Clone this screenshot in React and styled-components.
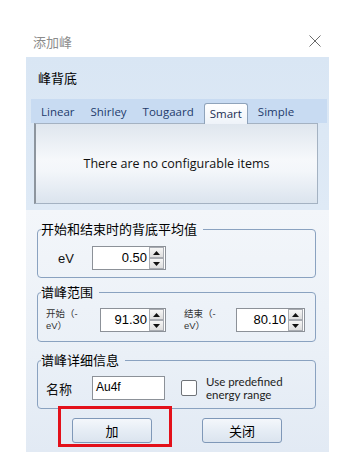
import React from 'react';
import styled, { createGlobalStyle } from 'styled-components';

const GlobalStyle = createGlobalStyle`
  html, body {
    margin: 0;
    padding: 0;
    background: #ffffff;
  }
  * {
    box-sizing: border-box;
  }
`;

const cjk = `"Noto Sans CJK SC", "Noto Sans", sans-serif`;
const ui = `"Open Sans", "Noto Sans CJK SC", sans-serif`;
const num = `"Liberation Sans", Arial, sans-serif`;

const Window = styled.div`
  width: 340px;
  height: 470px;
  background: #ffffff;
  font-family: ${cjk};
  color: #000;
  overflow: hidden;
`;

const TitleBar = styled.div`
  display: flex;
  align-items: center;
  justify-content: space-between;
  height: 30px;
  margin-top: 26px;
  margin-bottom: 1px;
  padding: 0 19px 0 33px;

  span {
    font-size: 13px;
    color: #8c8c8c;
  }
`;

const Dialog = styled.div`
  margin: 0 11px 0 26px;
`;

const HeaderPanel = styled.div`
  height: 153px;
  background: linear-gradient(180deg, #d9e6f4 0%, #dfeaf6 100%);
  padding: 0 2px 0 5px;
  display: flex;
  flex-direction: column;
`;

const PanelTitle = styled.div`
  height: 42px;
  display: flex;
  align-items: center;
  padding-left: 7px;
  padding-bottom: 2px;
  font-size: 13px;
  color: #000;
`;

const TabStrip = styled.div`
  display: flex;
  align-items: flex-end;
  height: 24px;
  padding-left: 4px;
  gap: 4px;
  background: #c8dbf2;
`;

const Tab = styled.div`
  font-family: ${ui};
  font-size: 11.5px;
  color: ${p => (p.$active ? '#1a2e52' : '#1f3b6c')};
  padding: 0 5px;
  height: ${p => (p.$active ? '21px' : '22px')};
  line-height: 20px;
  border: 1px solid ${p => (p.$active ? '#8fa3ba' : 'transparent')};
  border-bottom: none;
  border-radius: 3px 3px 0 0;
  background: ${p =>
    p.$active ? 'linear-gradient(180deg, #ffffff 0%, #eef3f9 100%)' : 'transparent'};
  margin-bottom: ${p => (p.$active ? '-1px' : '0')};
  position: relative;
`;

const TabPage = styled.div`
  margin: 0 9px 0 3px;
  height: 81px;
  border: 1px solid #a4b2c2;
  border-left: 2px solid #8d959e;
  background: linear-gradient(180deg, #dfe6ee 0%, #f6f8fb 45%, #f3f6fa 60%, #dbe4ee 100%);
  display: flex;
  align-items: center;
  justify-content: center;
  font-family: ${ui};
  font-size: 12.5px;
  color: #111;
`;

const Body = styled.div`
  height: 242px;
  background: linear-gradient(180deg, #f3f6fa 0%, #eaf0f7 60%, #e2eaf4 100%);
  padding: 10px 13px 9px 11px;
  display: flex;
  flex-direction: column;
`;

const Group = styled.fieldset`
  margin: ${p => p.$top || 0}px 0 0 0;
  padding: ${p => p.$pt}px 0 ${p => p.$pb}px ${p => p.$pl}px;
  border: 1px solid #8aa2c0;
  border-radius: 4px;
  min-width: 0;

  legend {
    font-size: 13px;
    line-height: 18px;
    padding: 0 6px 0 0;
    margin-left: ${p => 3 - p.$pl}px;
    color: #000;
  }
`;

const Row = styled.div`
  display: flex;
  align-items: center;
  height: 24px;
`;

const Label = styled.div`
  width: ${p => p.$w}px;
  flex: none;
  font-family: ${p => (p.$num ? num : cjk)};
  font-size: 13px;
  color: #111;
`;

const SmallLabel = styled.div`
  width: ${p => p.$w}px;
  margin-left: ${p => p.$ml || 0}px;
  flex: none;
  font-family: "Liberation Sans", "Noto Sans CJK SC", sans-serif;
  font-size: 9.5px;
  line-height: 12px;
  color: #333;
`;

const SpinBox = styled.div`
  display: flex;
  height: 24px;
  flex: none;
`;

const SpinInput = styled.div`
  width: ${p => p.$w}px;
  height: 24px;
  border: 1px solid #8c9198;
  border-right: none;
  background: #ffffff;
  font-family: ${num};
  font-size: 13px;
  line-height: 22px;
  text-align: right;
  padding-right: 2px;
  color: #000;
`;

const SpinButtons = styled.div`
  width: 17px;
  height: 24px;
  display: flex;
  flex-direction: column;
  border: 1px solid #8c9198;
  border-left: none;
  background: #fff;
  padding: 0 1px 0 0;
`;

const SpinButton = styled.div`
  flex: 1;
  border: 1px solid #a9acb2;
  background: linear-gradient(180deg, #f6f6f6 0%, #dedede 100%);
  display: flex;
  align-items: center;
  justify-content: center;
`;

const TextInput = styled.div`
  width: ${p => p.$w}px;
  height: 24px;
  flex: none;
  border: 1px solid #8c9198;
  background: #ffffff;
  font-family: ${num};
  font-size: 12px;
  line-height: 20px;
  padding-left: 3px;
  color: #000;
`;

const CheckBox = styled.div`
  width: 16px;
  height: 16px;
  flex: none;
  margin-left: 16px;
  border: 1px solid #6f7378;
  border-radius: 2px;
  background: #fff;
`;

const CheckText = styled.div`
  margin-left: 9px;
  font-family: Lato, "Open Sans", sans-serif;
  font-size: 11.5px;
  line-height: 13.5px;
  color: #222;
`;

const ButtonRow = styled.div`
  display: flex;
  gap: 50px;
  margin-top: 9px;
  padding-left: 35px;
`;

const ButtonSlot = styled.div`
  position: relative;
`;

const Button = styled.div`
  width: 80px;
  height: 25px;
  border: 1px solid #7f98b8;
  border-radius: 3px;
  background: linear-gradient(180deg, #f4f7fb 0%, #e6edf5 50%, #dbe4ef 100%);
  display: flex;
  align-items: center;
  justify-content: center;
  font-size: 13px;
  color: #000;
`;

const Highlight = styled.div`
  position: absolute;
  left: -14px;
  top: -12px;
  right: -20px;
  bottom: -4px;
  border: 3px solid #e3101a;
  pointer-events: none;
`;

const Arrow = ({ up }) => (
  <svg width="7" height="4" viewBox="0 0 7 4">
    <path d={up ? 'M0 4 L3.5 0 L7 4 Z' : 'M0 0 L3.5 4 L7 0 Z'} fill="#111" />
  </svg>
);

const Spinner = ({ value, w }) => (
  <SpinBox>
    <SpinInput $w={w}>{value}</SpinInput>
    <SpinButtons>
      <SpinButton>
        <Arrow up />
      </SpinButton>
      <SpinButton>
        <Arrow />
      </SpinButton>
    </SpinButtons>
  </SpinBox>
);

const CloseIcon = () => (
  <svg width="12" height="12" viewBox="0 0 12 12">
    <path d="M0.5 0.5 L11.5 11.5 M11.5 0.5 L0.5 11.5" stroke="#6b6b6b" strokeWidth="1" />
  </svg>
);

const tabs = ['Linear', 'Shirley', 'Tougaard', 'Smart', 'Simple'];

export default function App() {
  return (
    <>
      <GlobalStyle />
      <Window>
        <TitleBar>
          <span>添加峰</span>
          <CloseIcon />
        </TitleBar>
        <Dialog>
          <HeaderPanel>
            <PanelTitle>峰背底</PanelTitle>
            <TabStrip>
              {tabs.map(t => (
                <Tab key={t} $active={t === 'Smart'}>
                  {t}
                </Tab>
              ))}
            </TabStrip>
            <TabPage>There are no configurable items</TabPage>
          </HeaderPanel>
          <Body>
            <Group $pt={8} $pb={7} $pl={20}>
              <legend>开始和结束时的背底平均值</legend>
              <Row>
                <Label $w={34} $num>eV</Label>
                <Spinner value="0.50" w={57} />
              </Row>
            </Group>
            <Group $top={5} $pt={7} $pb={9} $pl={8}>
              <legend>谱峰范围</legend>
              <Row>
                <SmallLabel $w={54}>
                  开始（-
                  <br />
                  eV）
                </SmallLabel>
                <Spinner value="91.30" w={49} />
                <SmallLabel $w={52} $ml={18}>
                  结束（-
                  <br />
                  eV）
                </SmallLabel>
                <Spinner value="80.10" w={52} />
              </Row>
            </Group>
            <Group $top={9} $pt={7} $pb={8} $pl={8}>
              <legend>谱峰详细信息</legend>
              <Row>
                <Label $w={46}>名称</Label>
                <TextInput $w={73}>Au4f</TextInput>
                <CheckBox />
                <CheckText>
                  Use predefined
                  <br />
                  energy range
                </CheckText>
              </Row>
            </Group>
            <ButtonRow>
              <ButtonSlot>
                <Button>加</Button>
                <Highlight />
              </ButtonSlot>
              <ButtonSlot>
                <Button>关闭</Button>
              </ButtonSlot>
            </ButtonRow>
          </Body>
        </Dialog>
      </Window>
    </>
  );
}
